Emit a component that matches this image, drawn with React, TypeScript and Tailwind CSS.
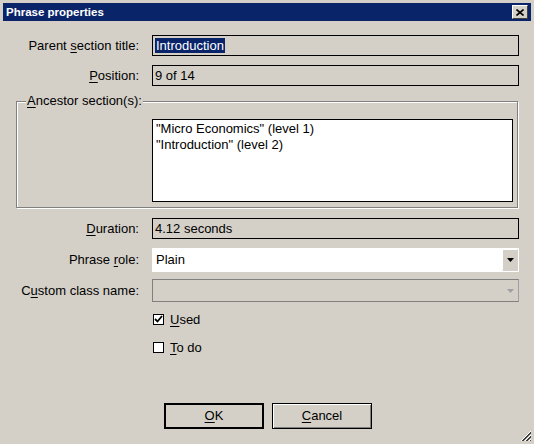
import React from "react";

const font = "font-['Liberation_Sans',Arial,sans-serif]";

function Label({ text, u, idx }: { text: string; u: string; idx: number }) {
  return (
    <span className="text-black">
      {text.slice(0, idx)}
      <span className="underline underline-offset-2">{u}</span>
      {text.slice(idx + u.length)}
    </span>
  );
}

function Row({
  label,
  children,
  className = "",
}: {
  label: React.ReactNode;
  children: React.ReactNode;
  className?: string;
}) {
  return (
    <div className={`flex items-center ${className}`}>
      <div className="w-[140px] pr-[1px] text-right">{label}</div>
      <div className="ml-[12px] w-[367px]">{children}</div>
    </div>
  );
}

function ReadOnlyField({ children }: { children: React.ReactNode }) {
  return (
    <div className="h-[21px] border border-black bg-[#d4d0c8] pl-[2px] flex items-center text-black">
      {children}
    </div>
  );
}

function Arrow({ color }: { color: string }) {
  return (
    <svg width="7" height="4" viewBox="0 0 7 4">
      <path d="M0 0h7L3.5 4z" fill={color} />
    </svg>
  );
}

function CheckBox({ checked }: { checked: boolean }) {
  return (
    <div className="w-[11px] h-[11px] border border-black bg-white flex items-center justify-center">
      {checked && (
        <svg width="9" height="9" viewBox="0 0 9 9">
          <path d="M1 4l2.5 2.5L8 1" stroke="black" strokeWidth="1.8" fill="none" />
        </svg>
      )}
    </div>
  );
}

export default function App() {
  return (
    <div
      className={`w-[534px] h-[444px] bg-[#d4d0c8] relative overflow-hidden text-[13px] leading-[16px] ${font}`}
    >
      {/* title bar */}
      <div className="mx-[3px] mt-[3px] h-[18px] bg-[#0a246a] flex items-center justify-between pl-[3px] pr-[3px]">
        <span className="text-white font-bold text-[11.5px] leading-[14px]">Phrase properties</span>
        <div className="w-[16px] h-[14px] bg-[#d4d0c8] border border-t-white border-l-white border-b-[#404040] border-r-[#404040] flex items-center justify-center">
          <svg width="8" height="7" viewBox="0 0 8 7">
            <path d="M0.5 0.5l7 6M7.5 0.5l-7 6" stroke="black" strokeWidth="1.6" />
          </svg>
        </div>
      </div>

      <div className="flex flex-col">
        <Row label={<Label text="Parent section title:" u="s" idx={7} />} className="mt-[14px] h-[21px]">
          <ReadOnlyField>
            <span className="bg-[#0a246a] text-white leading-[15px] px-[1px]">Introduction</span>
          </ReadOnlyField>
        </Row>
        <Row label={<Label text="Position:" u="P" idx={0} />} className="mt-[9px] h-[21px]">
          <ReadOnlyField>9 of 14</ReadOnlyField>
        </Row>

        {/* group box */}
        <div className="relative ml-[16px] mr-[16px] mt-[15px] h-[107px] border border-[#808080] shadow-[inset_1px_1px_0_#fff,1px_1px_0_#fff]">
          <span className="absolute -top-[9px] left-[9px] bg-[#d4d0c8] px-[1px]">
            <Label text="Ancestor section(s):" u="A" idx={0} />
          </span>
          <div className="ml-[135px] mr-[4px] mt-[17px] h-[83px] bg-white border border-black pl-[3px] pt-[1px] text-black">
            <div>"Micro Economics" (level 1)</div>
            <div>"Introduction" (level 2)</div>
          </div>
        </div>

        <Row label={<Label text="Duration:" u="D" idx={0} />} className="mt-[10px] h-[21px]">
          <ReadOnlyField>4.12 seconds</ReadOnlyField>
        </Row>
        <Row label={<Label text="Phrase role:" u="r" idx={7} />} className="mt-[9px] h-[24px]">
          <div className="h-[24px] bg-white flex items-center justify-between text-black">
            <span className="pl-[4px]">Plain</span>
            <div className="w-[16px] h-[22px] mr-[1px] bg-[#d4d0c8] border border-t-white border-l-white border-b-[#d4d0c8] border-r-[#d4d0c8] flex items-center justify-center">
              <Arrow color="black" />
            </div>
          </div>
        </Row>
        <Row label={<Label text="Custom class name:" u="u" idx={1} />} className="mt-[7px] h-[23px]">
          <div className="h-[23px] border border-[#808080] border-r-[#a0a0a0] bg-[#d4d0c8] flex items-center justify-end pr-[4px]">
            <Arrow color="#a0a0a0" />
          </div>
        </Row>

        <div className="ml-[153px] mt-[11px] flex flex-col gap-[15px]">
          <div className="flex items-center gap-[6px] h-[13px]">
            <CheckBox checked />
            <Label text="Used" u="U" idx={0} />
          </div>
          <div className="flex items-center gap-[6px] h-[13px]">
            <CheckBox checked={false} />
            <Label text="To do" u="T" idx={0} />
          </div>
        </div>

        <div className="ml-[164px] mt-[49px] flex gap-[8px]">
          <button className="w-[100px] h-[26px] border-2 border-black bg-[#d4d0c8] text-black flex items-center justify-center">
            <Label text="OK" u="O" idx={0} />
          </button>
          <button className="w-[100px] h-[26px] border border-black bg-[#d4d0c8] shadow-[inset_1px_1px_0_#fff,inset_-1px_-1px_0_#808080] text-black flex items-center justify-center">
            <Label text="Cancel" u="C" idx={0} />
          </button>
        </div>
      </div>

      {/* resize grip */}
      <svg className="absolute right-[2px] bottom-[2px]" width="12" height="12" viewBox="0 0 12 12">
        <path d="M11 1L1 11M11 5L5 11M11 9L9 11" stroke="#fff" strokeWidth="1" />
        <path d="M11 2L2 11M11 3L3 11M11 6L6 11M11 7L7 11M11 10L10 11" stroke="#404040" strokeWidth="1" />
      </svg>
    </div>
  );
}
